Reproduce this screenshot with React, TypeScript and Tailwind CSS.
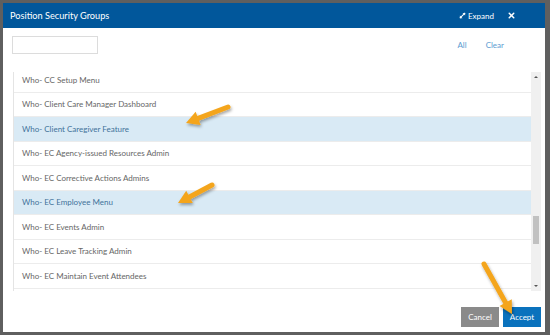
import { X } from "lucide-react";

const rows = [
  { label: "Who- CC Setup Menu", selected: false },
  { label: "Who- Client Care Manager Dashboard", selected: false },
  { label: "Who- Client Caregiver Feature", selected: true },
  { label: "Who- EC Agency-issued Resources Admin", selected: false },
  { label: "Who- EC Corrective Actions Admins", selected: false },
  { label: "Who- EC Employee Menu", selected: true },
  { label: "Who- EC Events Admin", selected: false },
  { label: "Who- EC Leave Tracking Admin", selected: false },
  { label: "Who- EC Maintain Event Attendees", selected: false },
];

function Arrow({ x1, y1, x2, y2 }: { x1: number; y1: number; x2: number; y2: number }) {
  const a = Math.atan2(y2 - y1, x2 - x1);
  const len = 13;
  const w = 7;
  const bx = x2 - Math.cos(a) * len;
  const by = y2 - Math.sin(a) * len;
  const px = -Math.sin(a) * w;
  const py = Math.cos(a) * w;
  return (
    <g>
      <line x1={x1} y1={y1} x2={bx} y2={by} stroke="#f4a51c" strokeWidth={5} strokeLinecap="round" />
      <polygon points={`${x2},${y2} ${bx + px},${by + py} ${bx - px},${by - py}`} fill="#f4a51c" />
    </g>
  );
}

export default function App() {
  return (
    <div className="relative w-[550px] h-[335px] bg-[#5f5f5f] p-[3px] pr-[5px] font-['Lato','Liberation_Sans',sans-serif]">
      <div className="flex h-full flex-col bg-white">
        <div className="flex h-[25px] items-center bg-[#01579b] pl-[7px] pr-[29px] text-white">
          <span className="text-[9.2px]">Position Security Groups</span>
          <span className="ml-auto flex items-center gap-[2px] text-[8px]">
            <svg width="7" height="7" viewBox="0 0 8 8">
              <path d="M1 7 L7 1" stroke="white" strokeWidth="1.3" />
              <path d="M4 1 H7 V4 Z" fill="white" />
              <path d="M1 4 V7 H4 Z" fill="white" />
            </svg>
            Expand
          </span>
          <X className="ml-[13px] h-[9px] w-[9px]" strokeWidth={4} />
        </div>
        <div className="flex items-center pl-[9px] pr-[41px] pt-[8px]">
          <div className="h-[18px] w-[86px] border border-[#dcdcdc] bg-white" />
          <span className="ml-auto text-[8px] text-[#5b9bd1]">All</span>
          <span className="ml-[19px] text-[8px] text-[#5b9bd1]">Clear</span>
        </div>
        <div className="ml-[10px] mr-[4px] mt-[18px] flex h-[219px]">
          <div className="flex-1 overflow-hidden border-l border-[#e4e4e4]">
            <div className="-mt-[4px]">
              {rows.map((r) => (
                <div
                  key={r.label}
                  className={`flex h-[24.5px] items-center border-b border-[#ececec] pl-[8px] text-[8px] ${
                    r.selected ? "bg-[#d9eaf5] text-[#41729a]" : "bg-white text-[#666]"
                  }`}
                >
                  {r.label}
                </div>
              ))}
            </div>
          </div>
          <div className="flex w-[10px] flex-col items-center bg-[#f0f0f0]">
            <div className="mt-[4px] h-0 w-0 border-x-[2px] border-b-[2px] border-x-transparent border-b-[#555]" />
            <div className="mt-[138px] h-[28px] w-[6px] bg-[#c1c1c1]" />
            <div className="mt-auto mb-[4px] h-0 w-0 border-x-[2px] border-t-[2px] border-x-transparent border-t-[#555]" />
          </div>
        </div>
        <div className="mt-auto flex justify-end gap-[4px] pb-[5px] pr-[4px]">
          <button className="h-[20px] w-[38px] bg-[#8a8a8a] text-[8px] text-white">Cancel</button>
          <button className="h-[20px] w-[38px] bg-[#0a72bd] text-[8px] text-white">Accept</button>
        </div>
      </div>
      <svg className="pointer-events-none absolute left-0 top-0" width="550" height="335">
        <defs>
          <filter id="sh" x="-20%" y="-20%" width="140%" height="140%">
            <feDropShadow dx="1" dy="2" stdDeviation="1.5" floodColor="#000" floodOpacity="0.35" />
          </filter>
        </defs>
        <g filter="url(#sh)">
          <Arrow x1={228} y1={107} x2={186} y2={123} />
          <Arrow x1={212} y1={185} x2={178} y2={203} />
          <Arrow x1={484} y1={264} x2={512} y2={314} />
        </g>
      </svg>
    </div>
  );
}
